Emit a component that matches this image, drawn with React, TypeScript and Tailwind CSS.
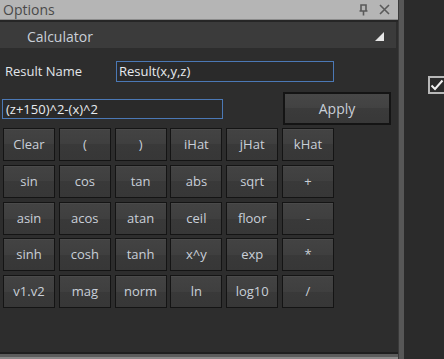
import React from "react";

const rows: string[][] = [
  ["Clear", "(", ")", "iHat", "jHat", "kHat"],
  ["sin", "cos", "tan", "abs", "sqrt", "+"],
  ["asin", "acos", "atan", "ceil", "floor", "-"],
  ["sinh", "cosh", "tanh", "x^y", "exp", "*"],
  ["v1.v2", "mag", "norm", "ln", "log10", "/"],
];

function Btn({ label }: { label: string }) {
  return (
    <div className="h-[33px] border border-[#141414] bg-[linear-gradient(to_bottom,#434343_0%,#3f3f3f_50%,#393939_50%,#373737_100%)] shadow-[inset_0_1px_0_#4a4a4a] flex items-center justify-center text-[13px] text-[#c9cfd8] leading-none">
      {label}
    </div>
  );
}

export default function App() {
  return (
    <div
      className="w-[444px] h-[359px] overflow-hidden flex bg-[#2b2b2b] relative"
      style={{ fontFamily: '"Open Sans", "Noto Sans", "Liberation Sans", sans-serif' }}
    >
      {/* left panel */}
      <div className="w-[398px] h-full flex flex-col bg-[#2d2d2d]">
        {/* title bar */}
        <div className="h-[20px] bg-[#b5b5b5] flex items-center pl-[3px] pr-[8px] text-[14px] text-[#4a4a4a] border-b border-[#8c8c8c]">
          <span className="leading-none">Options</span>
          <div className="ml-auto flex items-center gap-[10px]">
            <svg width="11" height="12" viewBox="0 0 11 12">
              <path d="M3 1h5v6H3z M1.5 7h8 M5.5 7v4.5" stroke="#5a5a5a" strokeWidth="1.6" fill="none" />
            </svg>
            <svg width="11" height="11" viewBox="0 0 11 11">
              <path d="M1 1l9 9M10 1l-9 9" stroke="#5a5a5a" strokeWidth="1.6" />
            </svg>
          </div>
        </div>
        <div className="h-[2px] bg-[#262626]" />
        {/* header */}
        <div className="h-[26px] bg-[#3b3b3b] flex items-center pl-[27px] pr-[12px] pt-[3px] text-[14px] text-[#c9cfd8] mr-[2px]">
          <span className="leading-none">Calculator</span>
          <svg className="ml-auto" width="9" height="9" viewBox="0 0 9 9">
            <path d="M9 0V9H0Z" fill="#e6e6e6" />
          </svg>
        </div>
        {/* result name row */}
        <div className="flex items-center mt-[13px] h-[20px]">
          <span className="pl-[5px] w-[116px] text-[13px] text-[#e2e6ea] leading-none">Result Name</span>
          <div className="w-[218px] h-[21px] border border-[#4b78b5] bg-[#2a2a2a] flex items-center pl-[2px] text-[13px] text-[#e8ebef] leading-none">
            Result(x,y,z)
          </div>
        </div>
        {/* expression row */}
        <div className="flex items-start mt-[11px] h-[33px]">
          <div className="ml-[2px] mt-[7px] w-[221px] h-[20px] border border-[#4b78b5] bg-[#2a2a2a] flex items-center pl-[3px] text-[13px] text-[#e8ebef] leading-none">
            (z+150)^2-(x)^2
          </div>
          <div className="ml-[60px] w-[108px] h-[33px] border-2 border-[#141414] bg-[linear-gradient(to_bottom,#474747_0%,#424242_50%,#3b3b3b_50%,#383838_100%)] flex items-center justify-center text-[14px] text-[#c9cfd8] leading-none">
            Apply
          </div>
        </div>
        {/* grid */}
        <div className="ml-[3px] mt-[3px] grid grid-cols-[repeat(6,52px)] gap-x-[3.8px] gap-y-[3.8px]">
          {rows.flat().map((l) => (
            <Btn key={l} label={l} />
          ))}
        </div>
        <div className="flex-1" />
        <div className="h-[2px] bg-[#1f1f1f]" />
        <div className="h-[3px] bg-[#5c5c5c]" />
        <div className="h-[2px] bg-[#8a8a8a]" />
      </div>
      {/* divider */}
      <div className="w-[6px] h-full flex">
        <div className="w-[1px] bg-[#3a3a3a]" />
        <div className="w-[5px] bg-[#575757]" />
      </div>
      {/* right area */}
      <div className="flex-1 h-full bg-[#2b2b2b] relative">
        <div className="absolute left-[24px] top-[76px] w-[18px] h-[18px] border-2 border-[#b8b8b8] flex items-center justify-center">
          <svg width="14" height="12" viewBox="0 0 14 12">
            <path d="M1.5 6.5l3.5 3.5 7.5-8.5" stroke="#f0f0f0" strokeWidth="2" fill="none" />
          </svg>
        </div>
      </div>
    </div>
  );
}
